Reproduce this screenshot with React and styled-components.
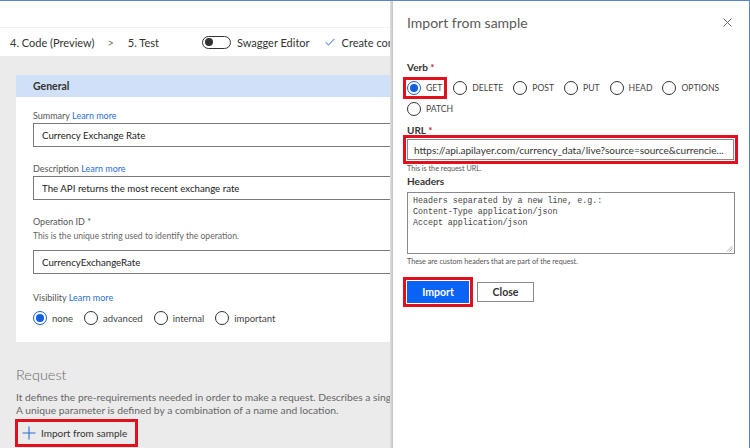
import React from "react";
import styled, { createGlobalStyle } from "styled-components";

const GlobalStyle = createGlobalStyle`
  html, body { margin: 0; padding: 0; background: #fff; }
  * { box-sizing: border-box; }
`;

const FONT = `Lato, "Open Sans", "Liberation Sans", sans-serif`;

const Frame = styled.div`
  width: 750px;
  height: 448px;
  display: flex;
  overflow: hidden;
  border-top: 1px solid #5b86c4;
  border-right: 1px solid #5b86c4;
  font-family: ${FONT};
  color: #333;
`;

/* ---------- left: connector editor ---------- */

const Editor = styled.div`
  width: 390px;
  flex: none;
  display: flex;
  flex-direction: column;
  overflow: hidden;
  background: #ebebeb;
`;

const TopBlank = styled.div`
  height: 26px;
  background: #fff;
  flex: none;
`;

const NavRow = styled.div`
  height: 29px;
  flex: none;
  background: #fff;
  border-top: 1px solid #f1f1f1;
  display: flex;
  align-items: center;
  padding-left: 10px;
  font-size: 11px;
  color: #333;
  white-space: nowrap;
  & > * {
    flex: none;
  }
`;

const NavStep = styled.span`
  margin-right: ${(p) => p.gap || 0}px;
`;

const Chevron = styled.span`
  color: #777;
  margin-right: 14px;
  font-size: 11px;
`;

const Toggle = styled.span`
  width: 29px;
  height: 13px;
  border: 1px solid #333;
  border-radius: 7px;
  display: inline-flex;
  align-items: center;
  padding-left: 2px;
  margin-right: 6px;
  &::before {
    content: "";
    width: 8px;
    height: 8px;
    border-radius: 50%;
    background: #333;
  }
`;

const CheckMark = styled.svg`
  margin: 0 7px 0 0;
`;

const Body = styled.div`
  flex: 1;
  padding: 19px 0 0 16px;
  background: #ebebeb;
`;

const Card = styled.section`
  width: 410px;
  background: #fff;
`;

const CardHeader = styled.div`
  height: 22px;
  background: #cfe0f8;
  display: flex;
  align-items: center;
  padding-left: 17px;
  font-size: 10.5px;
  font-weight: 700;
  color: #333;
`;

const CardBody = styled.div`
  padding: 12px 17px 17px;
  display: flex;
  flex-direction: column;
`;

const Label = styled.div`
  font-size: 9px;
  line-height: 13px;
  color: #555;
  margin-top: ${(p) => p.top || 0}px;
`;

const Learn = styled.span`
  color: #2b6fd1;
`;

const Hint = styled.div`
  font-size: 8.6px;
  line-height: 12px;
  color: #666;
  margin-top: 2px;
`;

const TextBox = styled.div`
  height: 24px;
  margin-top: ${(p) => p.top || 1}px;
  border: 1px solid #7a7a7a;
  display: flex;
  align-items: center;
  padding-left: 8px;
  font-size: 9.7px;
  color: #222;
  white-space: nowrap;
`;

const RadioRow = styled.div`
  display: flex;
  align-items: center;
  flex-wrap: wrap;
  column-gap: ${(p) => p.gap || 11}px;
  row-gap: 7px;
  margin-top: ${(p) => p.top || 0}px;
`;

const RadioItem = styled.label`
  display: inline-flex;
  align-items: center;
  gap: 5px;
  font-size: ${(p) => p.size || 10}px;
  color: #444;
  text-transform: ${(p) => (p.upper ? "uppercase" : "none")};
  white-space: nowrap;
`;

const Dot = styled.span`
  width: 14px;
  height: 14px;
  border-radius: 50%;
  border: 1px solid ${(p) => (p.checked ? "#1a5fd6" : "#333")};
  display: inline-flex;
  align-items: center;
  justify-content: center;
  flex: none;
  &::after {
    content: "";
    width: 8px;
    height: 8px;
    border-radius: 50%;
    background: ${(p) => (p.checked ? "#1060e0" : "transparent")};
  }
`;

const SectionTitle = styled.div`
  margin-top: 23px;
  font-size: 14.5px;
  line-height: 20px;
  color: #6a6a6a;
  font-weight: 300;
`;

const SectionText = styled.div`
  margin-top: 6px;
  font-size: 10.3px;
  line-height: 13px;
  color: #666;
  white-space: nowrap;
`;

const Highlight = styled.div`
  display: ${(p) => (p.block ? "block" : "inline-flex")};
  border: 3px solid #e2101c;
  padding: ${(p) => p.pad || "1px"};
  margin: ${(p) => p.m || "0"};
`;

const ImportLink = styled.button`
  display: flex;
  align-items: center;
  gap: 5px;
  height: 22px;
  padding: 0 8px 0 4px;
  border: none;
  background: transparent;
  font-family: ${FONT};
  font-size: 10px;
  color: #333;
`;

/* ---------- right: import panel ---------- */

const Divider = styled.div`
  width: 3px;
  flex: none;
  background: linear-gradient(to right, #e0e0e0, #c4c4c4);
`;

const Panel = styled.aside`
  flex: 1;
  background: #fff;
  padding: 11px 14px 0 14px;
  display: flex;
  flex-direction: column;
`;

const PanelHead = styled.div`
  display: flex;
  align-items: center;
  justify-content: space-between;
  height: 20px;
`;

const PanelTitle = styled.h2`
  margin: 0;
  font-size: 14px;
  font-weight: 400;
  color: #5a5a5a;
`;

const CloseX = styled.svg`
  margin-right: 3px;
`;

const FieldLabel = styled.div`
  font-size: 10px;
  font-weight: 700;
  line-height: 14px;
  color: #333;
  margin-top: ${(p) => p.top || 0}px;
  span {
    color: #c4262e;
  }
`;

const UrlInput = styled.div`
  height: 21px;
  border: 1px solid #8a8a8a;
  display: flex;
  align-items: center;
  padding-left: 6px;
  font-size: 10px;
  color: #333;
  white-space: nowrap;
  overflow: hidden;
`;

const Tiny = styled.div`
  font-size: 7.2px;
  line-height: 9px;
  color: #555;
  margin-top: ${(p) => p.top || 0}px;
`;

const TextArea = styled.div`
  height: 62px;
  margin-top: 4px;
  border: 1px solid #8a8a8a;
  padding: 3px 5px;
  font-family: "Liberation Mono", "DejaVu Sans Mono", monospace;
  font-size: 8.3px;
  line-height: 10.8px;
  color: #444;
  white-space: pre;
  position: relative;
`;

const Grip = styled.svg`
  position: absolute;
  right: 1px;
  bottom: 1px;
`;

const ButtonRow = styled.div`
  display: flex;
  align-items: center;
  gap: 4px;
  margin: 11px 0 0 -4px;
`;

const Button = styled.button`
  height: ${(p) => (p.primary ? 22 : 20)}px;
  width: ${(p) => (p.primary ? 62 : 57)}px;
  font-family: ${FONT};
  font-size: 10.5px;
  font-weight: 700;
  border: 1px solid ${(p) => (p.primary ? "#0b63f6" : "#8a8a8a")};
  background: ${(p) => (p.primary ? "#0b63f6" : "#fff")};
  color: ${(p) => (p.primary ? "#fff" : "#333")};
  padding: 0;
`;

const verbs = ["GET", "DELETE", "POST", "PUT", "HEAD", "OPTIONS", "PATCH"];
const visibility = ["none", "advanced", "internal", "important"];

function Radio({ label, checked, upper, size }) {
  return (
    <RadioItem upper={upper} size={size}>
      <Dot checked={checked} />
      {label}
    </RadioItem>
  );
}

export default function App() {
  return (
    <>
      <GlobalStyle />
      <Frame>
        <Editor>
          <TopBlank />
          <NavRow>
            <NavStep gap={13}>4. Code (Preview)</NavStep>
            <Chevron>&gt;</Chevron>
            <NavStep gap={43}>5. Test</NavStep>
            <Toggle />
            <NavStep gap={15}>Swagger Editor</NavStep>
            <CheckMark width="10" height="8" viewBox="0 0 10 8">
              <path d="M0.5 4.2 L3.5 7 L9.5 0.8" fill="none" stroke="#2b6fd1" strokeWidth="1" />
            </CheckMark>
            <NavStep>Create connector</NavStep>
          </NavRow>
          <Body>
            <Card>
              <CardHeader>General</CardHeader>
              <CardBody>
                <Label>
                  Summary <Learn>Learn more</Learn>
                </Label>
                <TextBox>Currency Exchange Rate</TextBox>
                <Label top={15}>
                  Description <Learn>Learn more</Learn>
                </Label>
                <TextBox>The API returns the most recent exchange rate</TextBox>
                <Label top={15}>Operation ID *</Label>
                <Hint>This is the unique string used to identify the operation.</Hint>
                <TextBox top={8}>CurrencyExchangeRate</TextBox>
                <Label top={17}>
                  Visibility <Learn>Learn more</Learn>
                </Label>
                <RadioRow top={7} gap={11}>
                  {visibility.map((v, i) => (
                    <Radio key={v} label={v} checked={i === 0} size={9.5} />
                  ))}
                </RadioRow>
              </CardBody>
            </Card>
            <SectionTitle>Request</SectionTitle>
            <SectionText>
              It defines the pre-requirements needed in order to make a request. Describes a single operation parameter.
              <br />A unique parameter is defined by a combination of a name and location.
            </SectionText>
            <Highlight m="2px 0 0 -1px" pad="0">
              <ImportLink>
                <svg width="14" height="14" viewBox="0 0 14 14">
                  <path d="M7 0.5 V13.5 M0.5 7 H13.5" stroke="#2b6fd1" strokeWidth="1.1" />
                </svg>
                Import from sample
              </ImportLink>
            </Highlight>
          </Body>
        </Editor>
        <Divider />
        <Panel>
          <PanelHead>
            <PanelTitle>Import from sample</PanelTitle>
            <CloseX width="9" height="9" viewBox="0 0 9 9">
              <path d="M0.5 0.5 L8.5 8.5 M8.5 0.5 L0.5 8.5" stroke="#666" strokeWidth="1" />
            </CloseX>
          </PanelHead>
          <FieldLabel top={28}>
            Verb <span>*</span>
          </FieldLabel>
          <RadioRow top={7} gap={10}>
            {verbs.map((v, i) =>
              i === 0 ? (
                <Highlight key={v} m="-4px" pad="1px 2px 1px 1px">
                  <Radio label={v} checked upper size={8.6} />
                </Highlight>
              ) : (
                <Radio key={v} label={v} upper size={8.6} />
              )
            )}
          </RadioRow>
          <FieldLabel top={7}>
            URL <span>*</span>
          </FieldLabel>
          <Highlight block m="-2px -3px 0 -4px">
            <UrlInput>https://api.apilayer.com/currency_data/live?source=source&amp;currencie...</UrlInput>
          </Highlight>
          <Tiny>This is the request URL.</Tiny>
          <FieldLabel top={1}>Headers</FieldLabel>
          <TextArea>
            {"Headers separated by a new line, e.g.:\nContent-Type application/json\nAccept application/json"}
            <Grip width="7" height="7" viewBox="0 0 7 7">
              <path d="M6.5 1 L1 6.5 M6.5 3.5 L3.5 6.5" stroke="#999" strokeWidth="0.8" />
            </Grip>
          </TextArea>
          <Tiny top={3}>These are custom headers that are part of the request.</Tiny>
          <ButtonRow>
            <Highlight pad="1px">
              <Button primary>Import</Button>
            </Highlight>
            <Button>Close</Button>
          </ButtonRow>
        </Panel>
      </Frame>
    </>
  );
}
